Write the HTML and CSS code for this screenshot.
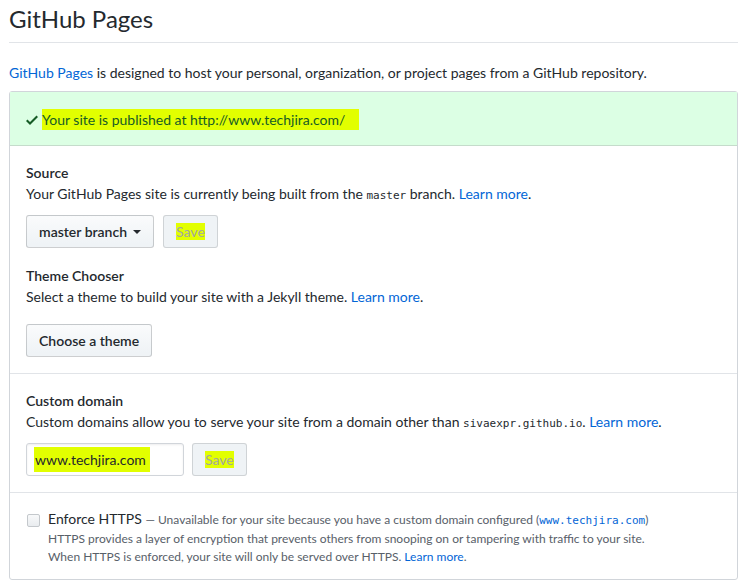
FILE: index.html
```html
<!DOCTYPE html>
<html>
<head>
<meta charset="utf-8">
<link rel="stylesheet" href="styles.css">
</head>
<body>
<div class="page">
  <h2 class="subhead">GitHub Pages</h2>
  <p class="intro"><a href="#">GitHub Pages</a> is designed to host your personal, organization, or project pages from a GitHub repository.</p>
  <div class="box">
    <div class="flash">
      <svg class="check" viewBox="0 0 12 16" width="12" height="16"><path fill="currentColor" d="M12 5l-8 8-4-4 1.5-1.5L4 10l6.5-6.5L12 5z"/></svg>
      <span class="hl hl-flash">Your site is published at http://www.techjira.com/</span>
    </div>
    <div class="section">
      <h4 class="sec-title">Source</h4>
      <p class="sec-desc">Your GitHub Pages site is currently being built from the <code>master</code> branch. <a href="#">Learn more</a>.</p>
      <div class="row">
        <button class="btn">master branch <span class="caret"></span></button>
        <button class="btn btn-disabled"><span class="hl">Save</span></button>
      </div>
      <h4 class="sec-title theme-title">Theme Chooser</h4>
      <p class="sec-desc">Select a theme to build your site with a Jekyll theme. <a href="#">Learn more</a>.</p>
      <div class="row theme-row">
        <button class="btn">Choose a theme</button>
      </div>
    </div>
    <div class="section">
      <h4 class="sec-title">Custom domain</h4>
      <p class="sec-desc">Custom domains allow you to serve your site from a domain other than <code>sivaexpr.github.io</code>. <a href="#">Learn more</a>.</p>
      <div class="row">
        <div class="input"><span class="hl hl-input">www.techjira.com</span></div>
        <button class="btn btn-disabled btn-save2"><span class="hl">Save</span></button>
      </div>
    </div>
    <div class="section last">
      <div class="https">
        <span class="checkbox"></span>
        <div class="https-text">
          <div class="https-line"><span class="https-label">Enforce HTTPS</span> <span class="note">— Unavailable for your site because you have a custom domain configured (<a href="#"><code>www.techjira.com</code></a>)</span></div>
          <div class="note">HTTPS provides a layer of encryption that prevents others from snooping on or tampering with traffic to your site.</div>
          <div class="note">When HTTPS is enforced, your site will only be served over HTTPS. <a href="#">Learn more</a>.</div>
        </div>
      </div>
    </div>
  </div>
</div>
</body>
</html>
```

FILE: styles.css
```css
* { box-sizing: border-box; }
body {
  margin: 0;
  background: #fff;
  font-family: "Lato", "Open Sans", sans-serif;
  font-size: 14px;
  line-height: 1.5;
  color: #24292e;
}
a { color: #0366d6; text-decoration: none; }
code {
  font-family: "DejaVu Sans Mono", "Liberation Mono", monospace;
  font-size: 11px;
}
.page {
  width: 729px;
  margin-left: 9px;
}
.subhead {
  margin: 4px 0 0;
  padding-bottom: 8px;
  font-size: 24px;
  font-weight: 400;
  line-height: 30px;
  border-bottom: 1px solid #e1e4e8;
}
.intro {
  margin: 19px 0 8px;
  line-height: 21px;
}
.box {
  border: 1px solid #d1d5da;
  border-radius: 3px;
}
.flash {
  display: flex;
  align-items: center;
  gap: 4px;
  padding: 17px 16px 15px;
  background: #dcffe4;
  color: #165c26;
  border-bottom: 1px solid #c5dccb;
  line-height: 21px;
}
.check { color: #165c26; width: 12px; height: 16px; }
.hl { background: #e2ff00; }
.hl-flash { padding: 0 14px 0 0; }
.section {
  padding: 16px 16px 16px;
  border-bottom: 1px solid #e1e4e8;
}
.section.last { border-bottom: 0; padding-top: 20px; padding-bottom: 13px; }
.sec-title {
  margin: 0;
  font-size: 14px;
  font-weight: 600;
  line-height: 21px;
}
.sec-desc {
  margin: 0;
  line-height: 21px;
}
.row {
  display: flex;
  gap: 9px;
  margin-top: 9px;
}
.theme-title { margin-top: 17px; }
.theme-row { margin-top: 17px; }
.btn {
  height: 33px;
  padding: 0 12px;
  font-family: inherit;
  font-size: 14px;
  font-weight: 600;
  color: #24292e;
  background: linear-gradient(#fafbfc, #eff3f6 90%);
  border: 1px solid rgba(27,31,35,0.2);
  border-radius: 3px;
  display: inline-flex;
  align-items: center;
  gap: 6px;
}
.caret {
  width: 0; height: 0;
  border-top: 4px solid #24292e;
  border-left: 4px solid transparent;
  border-right: 4px solid transparent;
}
.btn-disabled {
  color: #a3a8a0;
  background: #eff3f6;
  border-color: rgba(27,31,35,0.15);
  font-weight: 400;
}
.btn-save2 { margin-left: -1px; }
.input {
  width: 158px;
  height: 33px;
  border: 1px solid #d1d5da;
  border-radius: 3px;
  box-shadow: inset 0 1px 2px rgba(27,31,35,0.075);
  padding: 0 7px;
  display: flex;
  align-items: center;
}
.hl-input { padding: 2px 4px 2px 1px; }
.https { display: flex; gap: 8px; align-items: flex-start; }
.checkbox {
  flex: none;
  width: 13px; height: 13px;
  margin: 1px 0 0 1px;
  border: 1px solid #c4c8cc;
  border-radius: 2px;
  background: linear-gradient(#f8f9fa, #e9ecef);
}
.https-text { line-height: 18px; margin-top: -3px; }
.https-label { font-size: 14px; color: #24292e; }
.note { font-size: 12px; color: #586069; }
.note code { font-size: 11px; }
```
